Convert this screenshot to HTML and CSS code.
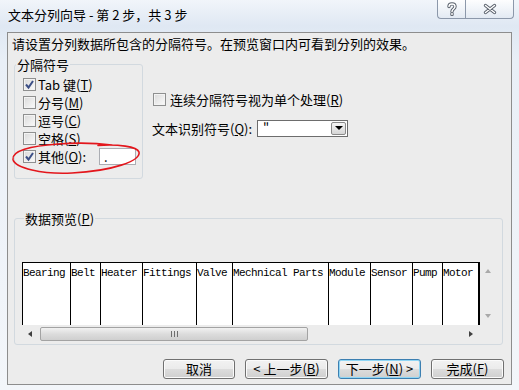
FILE: index.html
```html
<!DOCTYPE html>
<html lang="zh-CN">
<head>
    <meta charset="UTF-8">
    <title>文本分列向导 - 第 2 步，共 3 步</title>
    <link rel="stylesheet" href="styles.css">
</head>
<body>
<div class="window">
    <!-- barra de título -->
    <div class="titlebar">
        <span class="title">文本分列向导 - 第 2 步，共 3 步</span>
        <div class="caption">
            <span class="cap help">
                <svg width="12" height="14" viewBox="-6 -7 12 14"><path class="glyph-out" d="M-3,-2.5 C-3,-6 3,-6 3,-2.5 C3,0 0,0 0,2.5 M0,4.5 L0,5.5"/><path class="glyph-in" d="M-3,-2.5 C-3,-6 3,-6 3,-2.5 C3,0 0,0 0,2.5 M0,4.5 L0,5.5"/></svg>
            </span>
            <span class="cap close">
                <svg width="14" height="12" viewBox="-7 -6 14 12"><path class="glyph-out" d="M-4.5,-3.5 L4.5,3.5 M4.5,-3.5 L-4.5,3.5"/><path class="glyph-in" d="M-4.5,-3.5 L4.5,3.5 M4.5,-3.5 L-4.5,3.5"/></svg>
            </span>
        </div>
    </div>

    <div class="client">
        <p class="intro">请设置分列数据所包含的分隔符号。在预览窗口内可看到分列的效果。</p>

        <div class="upper">
            <fieldset class="group delims">
                <legend>分隔符号</legend>
                <div class="row"><span class="check"><svg viewBox="0 0 11 11"><path d="M2,5.5 L4.5,8.5 L9,2"/></svg></span><span>Tab 键(<u>T</u>)</span></div>
                <div class="row"><span class="check"></span><span>分号(<u>M</u>)</span></div>
                <div class="row"><span class="check"></span><span>逗号(<u>C</u>)</span></div>
                <div class="row"><span class="check"></span><span>空格(<u>S</u>)</span></div>
                <div class="row"><span class="check"><svg viewBox="0 0 11 11"><path d="M2,5.5 L4.5,8.5 L9,2"/></svg></span><span class="other-label">其他(<u>O</u>):</span><span class="field">.</span></div>
            </fieldset>

            <div class="options">
                <div class="row"><span class="check"></span><span>连续分隔符号视为单个处理(<u>R</u>)</span></div>
                <div class="row qual">
                    <span class="qual-label">文本识别符号(<u>Q</u>):</span>
                    <span class="combo"><span class="combo-val">"</span><span class="combo-btn"><span class="tri"></span></span></span>
                </div>
            </div>
        </div>

        <fieldset class="group preview-group">
            <legend>数据预览(<u>P</u>)</legend>
            <div class="preview">
                <div class="grid">
                    <div class="cell">Bearing</div>
                    <div class="cell">Belt</div>
                    <div class="cell">Heater</div>
                    <div class="cell">Fittings</div>
                    <div class="cell">Valve</div>
                    <div class="cell">Mechnical Parts</div>
                    <div class="cell">Module</div>
                    <div class="cell">Sensor</div>
                    <div class="cell">Pump</div>
                    <div class="cell">Motor</div>
                </div>
                <div class="vscroll"><span class="arr up"></span><span class="arr down"></span></div>
                <div class="hscroll">
                    <span class="arr left"></span>
                    <span class="thumb"><span class="grip"></span></span>
                    <span class="arr right"></span>
                </div>
            </div>
        </fieldset>

        <div class="buttons">
            <span class="btn w-cancel">取消</span>
            <span class="btn w-step">&lt; 上一步(<u>B</u>)</span>
            <span class="btn w-step default">下一步(<u>N</u>) &gt;</span>
            <span class="btn w-finish">完成(<u>F</u>)</span>
        </div>
    </div>

    <!-- marca roja hecha a mano -->
    <svg class="mark" width="519" height="390">
        <path d="M98,145.5 C118,144 137,146.5 139,152 C141,161 112,171 72,173 C42,174.5 15,168 13,159.5 C11.5,151 30,146 58,144 C78,142.5 96,143 112,145"/>
    </svg>
</div>
</body>
</html>
```

FILE: styles.css
```css
body {
    margin: 0;
    background: #ffffff;
}
.window {
    position: relative;
    width: 519px;
    height: 390px;
    overflow: hidden;
    background: linear-gradient(#f1f5fa, #dfe8f3 26px, #e9eff7 60px, #f3f6fa);
    font-family: "Noto Sans CJK SC", sans-serif;
    font-size: 13px;
    color: #000;
}

/* barra de título */
.titlebar {
    height: 32px;
    display: flex;
    align-items: flex-start;
}
.title {
    padding: 6px 0 0 8px;
    line-height: 17px;
}
.caption {
    margin-left: auto;
    margin-right: 5px;
    display: flex;
}
.cap {
    height: 18px;
    border: 1px solid #8c98aa;
    border-top: none;
    background: linear-gradient(rgba(255,255,255,0.85), rgba(226,233,242,0.7));
    display: flex;
    align-items: center;
    justify-content: center;
}
.help {
    width: 27px;
    border-right: none;
    border-radius: 0 0 0 4px;
}
.close {
    width: 47px;
    border-radius: 0 0 4px 0;
}
.glyph-out {
    fill: none;
    stroke: #59606b;
    stroke-width: 3.4;
    stroke-linecap: round;
}
.glyph-in {
    fill: none;
    stroke: #ffffff;
    stroke-width: 1.5;
    stroke-linecap: round;
}

/* área cliente */
.client {
    margin-left: 7px;
    width: 505px;
    height: 353px;
    box-sizing: border-box;
    border: 1px solid #8d8d8d;
    background: #ececec;
}
.intro {
    margin: 0;
    padding: 2px 0 0 4px;
    line-height: 17px;
}
.upper {
    display: flex;
    align-items: flex-start;
    margin-top: 4px;
}
.group {
    margin: 0;
    padding: 0;
    min-width: 0;
    border: 1px solid #d2d9df;
    border-radius: 3px;
}
.group legend {
    padding: 0 1px;
    margin-left: 1px;
    line-height: 17px;
}
.delims {
    width: 129px;
    box-sizing: border-box;
    margin-left: 6px;
    padding: 2px 0 13px 0;
}
.delims .row {
    padding-left: 8px;
}
.row {
    display: flex;
    align-items: center;
    height: 18px;
    line-height: 17px;
    white-space: nowrap;
}
.check {
    flex: none;
    display: flex;
    width: 13px;
    height: 13px;
    box-sizing: border-box;
    margin-right: 2px;
    border: 1px solid #8e8f8f;
    background: linear-gradient(135deg, #d9d9d9, #fbfbfb);
    box-shadow: inset 0 0 0 1px #f3f3f3;
}
.check svg {
    width: 11px;
    height: 11px;
}
.check path {
    fill: none;
    stroke: #3c4f86;
    stroke-width: 2;
}
.other-label {
    width: 61px;
}
.field {
    width: 37px;
    height: 17px;
    box-sizing: border-box;
    border: 1px solid #abadb3;
    background: #fff;
    padding-left: 4px;
    line-height: 15px;
}
.options {
    margin: 34px 0 0 9px;
}
.options .check {
    margin-left: 1px;
    margin-right: 4px;
}
.qual {
    margin-top: 11px;
}
.qual-label {
    width: 105px;
}
.combo {
    display: flex;
    width: 91px;
    height: 17px;
    box-sizing: border-box;
    border: 1px solid #6d6d6d;
    background: #fff;
}
.combo-val {
    flex: 1;
    padding-left: 5px;
    line-height: 15px;
}
.combo-btn {
    width: 15px;
    box-sizing: border-box;
    margin: 1px;
    border: 1px solid #8a8a8a;
    border-radius: 2px;
    background: linear-gradient(#f6f6f6, #d6d6d6);
    display: flex;
    align-items: center;
    justify-content: center;
}
.tri {
    border-left: 4px solid transparent;
    border-right: 4px solid transparent;
    border-top: 4px solid #000;
}

/* vista previa */
.preview-group {
    width: 489px;
    box-sizing: border-box;
    margin: 31px 0 0 6px;
    padding: 35px 0 2px 7px;
}
.preview-group legend {
    margin-left: 2px;
}
.preview {
    display: grid;
    grid-template-columns: 458px 16px;
    grid-template-rows: 63px 17px;
}
.grid {
    display: grid;
    grid-template-columns: 48px 30px 42px 54px 36px 96px 42px 42px 30px 36px;
    background: #fff;
    border-top: 1px solid #000;
    border-right: 2px solid #000;
}
.cell {
    border-left: 1px solid #000;
    padding-top: 3px;
    font-family: "Liberation Mono", monospace;
    font-size: 11px;
    letter-spacing: -0.6px;
    line-height: 14px;
    white-space: nowrap;
    overflow: hidden;
}
.vscroll {
    display: flex;
    flex-direction: column;
    align-items: center;
    justify-content: space-between;
    padding: 7px 0;
}
.hscroll {
    display: flex;
    align-items: center;
    padding-left: 6px;
}
.arr {
    width: 0;
    height: 0;
}
.up {
    border-left: 3.5px solid transparent;
    border-right: 3.5px solid transparent;
    border-bottom: 4px solid #a9a9a9;
}
.down {
    border-left: 3.5px solid transparent;
    border-right: 3.5px solid transparent;
    border-top: 4px solid #a9a9a9;
}
.left {
    border-top: 3.5px solid transparent;
    border-bottom: 3.5px solid transparent;
    border-right: 4px solid #404040;
}
.right {
    margin-left: 161px;
    border-top: 3.5px solid transparent;
    border-bottom: 3.5px solid transparent;
    border-left: 4px solid #404040;
}
.thumb {
    display: flex;
    align-items: center;
    justify-content: center;
    width: 268px;
    height: 14px;
    box-sizing: border-box;
    margin-left: 8px;
    border: 1px solid #a3a3a3;
    border-radius: 2px;
    background: linear-gradient(#f1f1f1, #dcdcdc 50%, #cfcfcf);
}
.grip {
    width: 7px;
    height: 6px;
    background: repeating-linear-gradient(90deg, #6f6f6f 0 1px, transparent 1px 3px);
}

/* botones */
.buttons {
    display: flex;
    justify-content: flex-end;
    gap: 10px;
    margin-top: 14px;
    padding-right: 7px;
}
.btn {
    height: 20px;
    box-sizing: border-box;
    border: 1px solid #707070;
    border-radius: 3px;
    background: linear-gradient(#f2f2f2, #ebebeb 50%, #dddddd 50%, #cfcfcf);
    box-shadow: inset 0 0 0 1px #fbfbfb;
    line-height: 18px;
    text-align: center;
    white-space: nowrap;
}
.btn.default {
    border-color: #3c7fb1;
    box-shadow: inset 0 0 0 1px #8fd6f5;
}
.w-cancel { width: 72px; }
.w-step { width: 83px; }
.w-finish { width: 73px; }

/* marca roja */
.mark {
    position: absolute;
    left: 0;
    top: 0;
    pointer-events: none;
}
.mark path {
    fill: none;
    stroke: #e3161c;
    stroke-width: 1.6;
    stroke-linecap: round;
}
```
